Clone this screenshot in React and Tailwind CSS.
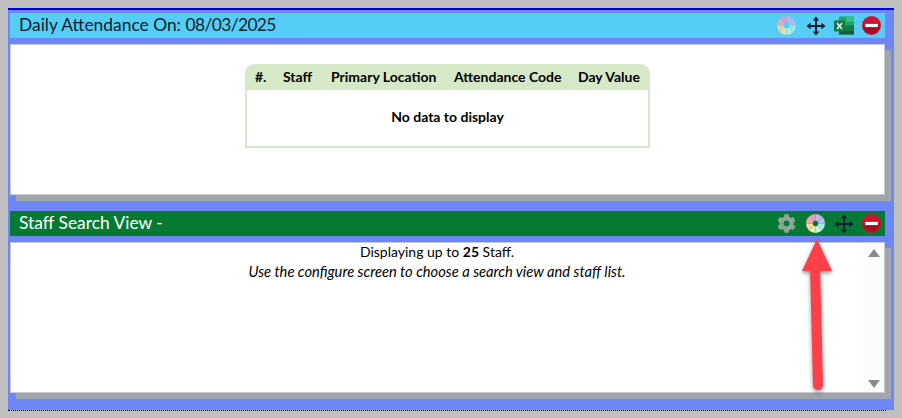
import { FaCog } from 'react-icons/fa';

const font = { fontFamily: '"Lato"' };

// pastel colour wheel used for the chart button
const WEDGES = ['#cdb0ea', '#b4c0f0', '#a8ece6', '#bdf4de', '#f8e8a4', '#f8d8a8', '#f4aab2', '#ec9ac6'];

function Wheel({ faded = false, className = '' }) {
  return (
    <svg width="19" height="19" viewBox="-10 -10 20 20" className={`${faded ? 'opacity-80' : ''} ${className}`}>
      {WEDGES.map((c, i) => {
        const a = (i * Math.PI) / 4 - Math.PI / 2;
        const b = a + Math.PI / 4;
        const d = `M0 0L${10 * Math.cos(a)} ${10 * Math.sin(a)}A10 10 0 0 1 ${10 * Math.cos(b)} ${10 * Math.sin(b)}Z`;
        return <path key={c} d={d} fill={c} />;
      })}
      <circle r="2.8" fill={faded ? '#55cdf7' : '#067a35'} />
    </svg>
  );
}

function MoveIcon() {
  return (
    <svg width="20" height="20" viewBox="0 0 20 20" fill="#0c1f2c">
      <rect x="9" y="3" width="2" height="14" />
      <rect x="3" y="9" width="14" height="2" />
      <path d="M10 0.5L13.2 4.5H6.8Z" />
      <path d="M10 19.5L13.2 15.5H6.8Z" />
      <path d="M0.5 10L4.5 6.8V13.2Z" />
      <path d="M19.5 10L15.5 6.8V13.2Z" />
    </svg>
  );
}

function ExcelIcon() {
  return (
    <svg width="20" height="19" viewBox="0 0 20 18">
      <rect x="5" y="0" width="15" height="18" rx="1" fill="#21a366" />
      <rect x="12" y="0" width="8" height="5" fill="#33c481" />
      <rect x="5" y="9" width="15" height="5" fill="#107c41" />
      <rect x="5" y="14" width="15" height="4" fill="#185c37" />
      <rect x="0" y="4" width="11" height="11" rx="1" fill="#107c41" />
      <path d="M3 6.5L8 12.5M8 6.5L3 12.5" stroke="#fff" strokeWidth="1.4" />
    </svg>
  );
}

function StopIcon({ className = '' }) {
  return (
    <svg width="19" height="19" viewBox="0 0 18 18" className={className}>
      <circle cx="9" cy="9" r="9" fill="#d0122f" />
      <path d="M1 9A8 8 0 0 0 17 9Z" fill="#a80d26" />
      <rect x="3" y="7.5" width="12" height="3" fill="#fff" />
    </svg>
  );
}

function Panel({ title, headerClass, icons, children }) {
  return (
    <div>
      <div className={`flex h-[25px] items-center justify-between pl-[9px] pr-[3px] text-[17.4px] ${headerClass}`}>
        <span className="pb-[1px]">{title}</span>
        {icons}
      </div>
      <div className="mt-[6px] flex h-[151px] border border-[#c8cad0] bg-white shadow-[6px_6px_1px_#a0a4ab]">
        {children}
      </div>
    </div>
  );
}

const columns = ['#.', 'Staff', 'Primary Location', 'Attendance Code', 'Day Value'];

export default function App() {
  return (
    <div className="relative h-[418px] w-[902px] bg-[#c0c0c0] px-2 pt-2 text-black" style={font}>
      <div className="h-[402px] border-t-2 border-[#0000e0] bg-[#6d87f5] pl-[2px] pr-[9px] pt-[3px]">
        <Panel
          title={<>Daily Attendance On: <span className="tracking-[-0.6px]">08/03/2025</span></>}
          headerClass="bg-[#55cdf7] text-[#10222c]"
          icons={
            <div className="flex items-center gap-[8px] pr-[1px]">
              <Wheel faded className="mr-[2px]" />
              <MoveIcon />
              <ExcelIcon />
              <StopIcon />
            </div>
          }
        >
          <div className="flex flex-1 justify-center pt-[19px]">
            <div className="h-[84px] w-[405px] rounded-t-[10px] border-2 border-t-0 border-[#d5e8c8]">
              <div className="-mx-[2px] flex h-[26px] items-center rounded-t-[10px] bg-[#d5e8c8] pb-[1px] pl-[10px] text-[14px] font-bold">
                {columns.map((c, i) => (
                  <span key={c} className={['w-[28px]', 'w-[48px]', 'w-[123px]', 'w-[124px]', ''][i]}>{c}</span>
                ))}
              </div>
              <div className="pt-[16px] text-center text-[14px] font-bold">No data to display</div>
            </div>
          </div>
        </Panel>
        <div className="mt-[16px]">
          <Panel
            title="Staff Search View -"
            headerClass="bg-[#067a35] text-white"
            icons={
              <div className="flex items-center gap-[9px] pr-[1px]">
                <FaCog size={19} className="mr-[1px] text-[#8fa59b]" />
                <Wheel />
                <MoveIcon />
                <StopIcon className="-ml-[1px]" />
              </div>
            }
          >
            <div className="-mt-[1px] flex-1 text-center text-[14px] leading-[20px]">
              <div>Displaying up to <b>25</b> Staff.</div>
              <div className="-mt-[1px] text-[14.7px] italic">Use the configure screen to choose a search view and staff list.</div>
            </div>
            <div className="flex w-[21px] flex-col items-center justify-between bg-[#fcfcfc] pb-[4px] pt-[6px]">
              <div className="h-0 w-0 border-x-[6.5px] border-b-[8px] border-x-transparent border-b-[#8a8a8a]" />
              <div className="h-0 w-0 border-x-[6.5px] border-t-[8px] border-x-transparent border-t-[#8a8a8a]" />
            </div>
          </Panel>
        </div>
      </div>
      <div className="mr-[8px] border-t border-dotted border-black" />
      {/* red annotation arrow */}
      <svg width="60" height="160" viewBox="0 0 60 160" className="absolute left-[788px] top-[234px]" style={{ filter: 'drop-shadow(0 2px 2px rgba(0,0,0,0.45))' }}>
        <path d="M27 30L30 151" stroke="#ff4048" strokeWidth="10" strokeLinecap="round" fill="none" />
        <path d="M29 5L14 37H44Z" fill="#ff4048" />
      </svg>
    </div>
  );
}
